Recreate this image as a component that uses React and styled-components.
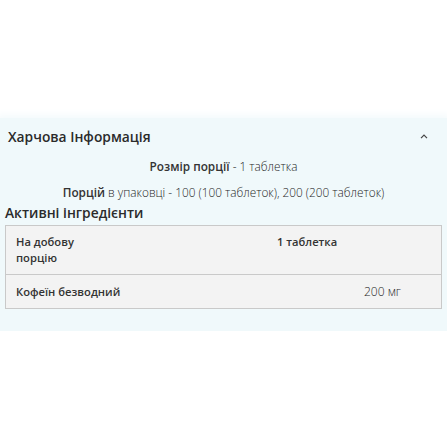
import React from 'react';
import styled, { createGlobalStyle } from 'styled-components';

const GlobalStyle = createGlobalStyle`
  body {
    margin: 0;
    background: #ffffff;
    font-family: "Open Sans", "Liberation Sans", sans-serif;
    color: #333333;
  }
`;

const Page = styled.div`
  padding-top: 118px;
`;

const Panel = styled.section`
  background: #f0f9fb;
  box-shadow: 0 0 8px 3px #f3fafc;
  padding: 8px 5px 22px;
`;

const Header = styled.div`
  display: flex;
  align-items: center;
  justify-content: space-between;
  height: 20px;
  padding: 0 14px 0 3px;
`;

const Title = styled.h2`
  margin: 0;
  font-size: 13.8px;
  font-weight: 600;
  color: #2b2b2b;
`;

const Chevron = styled.svg`
  width: 8px;
  height: 5px;
  color: #444;
`;

const InfoLine = styled.p`
  margin: ${p => p.$top}px 0 0;
  text-align: center;
  font-size: 11.8px;
  line-height: 16px;
  font-weight: 300;
  color: #1f1f1f;

  b {
    font-weight: 600;
    color: #333;
  }
`;

const Subtitle = styled.h3`
  margin: 4px 0 0;
  font-size: 13.8px;
  line-height: 18px;
  font-weight: 600;
  color: #2b2b2b;
`;

const Table = styled.div`
  margin-top: 3px;
  background: #f3f3f3;
  border: 1px solid #c9c9c9;
`;

const Row = styled.div`
  display: grid;
  grid-template-columns: 261px 87px 1fr;
  padding: ${p => p.$pad}px 10px;
  font-size: 11.2px;
  line-height: 16px;
  border-top: ${p => (p.$divider ? '1px solid #c9c9c9' : 'none')};
`;

const Name = styled.div`
  font-weight: 600;
  max-width: ${p => (p.$narrow ? '70px' : 'none')};
`;

const Amount = styled.div`
  font-weight: ${p => (p.$light ? 300 : 600)};
  font-size: ${p => (p.$light ? '12px' : '11.2px')};
  color: ${p => (p.$light ? '#1f1f1f' : '#333')};
`;

const App = () => (
  <Page>
    <GlobalStyle />
    <Panel>
      <Header>
        <Title>Харчова Інформація</Title>
        <Chevron viewBox="0 0 8 5">
          <path d="M1 4.2 L4 1.2 L7 4.2" fill="none" stroke="currentColor" strokeWidth="1.2" />
        </Chevron>
      </Header>
      <InfoLine $top={12}>
        <b>Розмір порції</b> - 1 таблетка
      </InfoLine>
      <InfoLine $top={10}>
        <b>Порцій</b> в упаковці - 100 (100 таблеток), 200 (200 таблеток)
      </InfoLine>
      <Subtitle>Активні інгредієнти</Subtitle>
      <Table>
        <Row $pad={8}>
          <Name $narrow>На добову порцію</Name>
          <Amount>1 таблетка</Amount>
          <div />
        </Row>
        <Row $pad={8.5} $divider>
          <Name>Кофеїн безводний</Name>
          <div />
          <Amount $light>200 мг</Amount>
        </Row>
      </Table>
    </Panel>
  </Page>
);

export default App;
